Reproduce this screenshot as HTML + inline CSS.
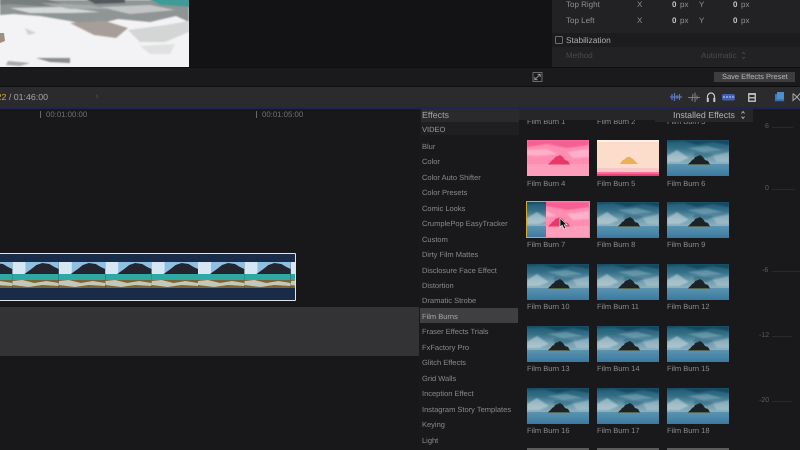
<!DOCTYPE html>
<html><head><meta charset="utf-8"><style>
html,body{margin:0;padding:0;background:#18181a}
#p{position:relative;width:800px;height:450px;overflow:hidden;background:#18181a;font-family:"Liberation Sans",sans-serif;color:#9a9a9a;text-rendering:geometricPrecision}
.a{position:absolute}
.t{position:absolute;white-space:nowrap;line-height:12px;font-size:8px;color:#8f8f8f}
.c{position:absolute;left:422px;white-space:nowrap;line-height:12px;font-size:7.5px;color:#8a8a8a}
.l{position:absolute;white-space:nowrap;line-height:12px;font-size:7.5px;color:#8c8c8c}
svg.th{position:absolute;width:62px;height:36px}
</style></head><body><div id="p">

<svg width="0" height="0" style="position:absolute"><defs>
<linearGradient id="sk" x1="0" y1="0" x2="0" y2="1"><stop offset="0" stop-color="#1f5a72"/><stop offset=".35" stop-color="#346f88"/><stop offset=".7" stop-color="#6f9cae"/><stop offset="1" stop-color="#8cb0bc"/></linearGradient>
<linearGradient id="se" x1="0" y1="0" x2="0" y2="1"><stop offset="0" stop-color="#5b93b0"/><stop offset="1" stop-color="#3a7aa0"/></linearGradient>
<filter id="b1"><feGaussianBlur stdDeviation=".7"/></filter>
<filter id="b2"><feGaussianBlur stdDeviation=".9"/></filter>
<symbol id="isl" viewBox="0 0 62 36">
<rect width="62" height="24" fill="url(#sk)"/>
<g filter="url(#b1)">
<path d="M0 2L16 1 30 5 46 2 62 5V0H0Z" fill="#174a60"/>
<path d="M20 8L40 6 56 10 36 12Z" fill="#8fb6c4" opacity=".5"/>
<path d="M0 16L10 10 22 18 12 22 0 22Z" fill="#d3e2e6" opacity=".5"/>
<path d="M46 16L62 12V22L50 22Z" fill="#c5d8dd" opacity=".4"/>
<path d="M28 12L48 14 40 18 26 16Z" fill="#2f6b82" opacity=".6"/>
</g>
<rect y="24" width="62" height="12" fill="url(#se)"/>
<path d="M21 24.500C23 22 24 22 25 20L27 19 28 17 31 16 33 15 36 17 38 20 41 21 43 24.500Z" fill="#1c2226"/>
<rect x="22" y="24" width="20" height="1" fill="#5c6b48" opacity=".7"/>
</symbol>
<symbol id="pk" viewBox="0 0 62 36">
<rect width="62" height="36" fill="#ff8db2"/>
<g filter="url(#b1)">
<path d="M0 0H62V5L40 8 20 4 0 7Z" fill="#f65f91"/>
<path d="M0 10L20 9 30 14 10 16 0 15ZM40 12L62 9V17L46 18Z" fill="#ffb0ca"/>
</g>
<rect y="24" width="62" height="12" fill="#ff9dbd"/>
<path d="M21 24.500C23 22 24 22 25 20L27 19 28 17 31 16 33 15 36 17 38 20 41 21 43 24.500Z" fill="#e8386a"/>
</symbol>
<symbol id="pe" viewBox="0 0 62 36">
<rect width="62" height="36" fill="#fcdccb"/>
<rect y="0" width="62" height="2" fill="#fff0e6"/>
<path d="M23 24C24 22 25 21 26 20L28 19 30 17 33 17 36 19 38 21 41 24Z" fill="#eeb056"/>
<rect y="28" width="62" height="4" fill="#fbc6c8"/>
<rect y="32" width="62" height="2" fill="#f76f9e"/>
<rect y="34" width="62" height="2" fill="#e8406f"/>
</symbol>
<symbol id="strip" viewBox="0 0 46.400 26" preserveAspectRatio="none">
<rect width="46.400" height="12" fill="#8fc0e4"/>
<rect width="13" height="12" fill="#d6e6f2"/>
<path d="M12 12L19 7 24 3 30 1 37 2 42 5 46.400 7V12Z" fill="#23262f"/>
<rect y="12" width="46.400" height="8" fill="#2fa8a4"/>
<rect y="18" width="46.400" height="8" fill="#7a6632"/>
<path d="M0 19L10 18 22 21 34 19 46.400 21V24L30 23 16 25 0 23Z" fill="#c4c8bc"/>
</symbol>
</defs></svg>

<!-- viewer image -->
<svg class="a" style="left:0;top:0" width="189" height="67" viewBox="0 0 189 67">
<rect width="189" height="67" fill="#f3f2f4"/>
<g filter="url(#b2)">
<path d="M0 0H189V22L176 16 150 22 118 19 90 26 70 21 40 16 14 14 0 15Z" fill="#8f9595"/>
<path d="M148 -2H192V7L160 5Z" fill="#3f9a98"/>
<path d="M85 -2H125V3L95 4Z" fill="#55595b"/>
<path d="M0 -2H45L65 5 40 6 10 4 0 5Z" fill="#787d7d"/>
<path d="M10 8L60 7 100 12 70 13 30 13Z" fill="#d6d8d7"/>
<path d="M100 7L150 5 175 10 130 14Z" fill="#c2c5c4"/>
<path d="M40 3L90 5 110 9 70 9Z" fill="#a6aaaa"/>
<path d="M70 23L105 21 128 28 116 38 94 35Z" fill="#a89e99"/>
<path d="M128 30L166 25 189 21V32L165 42 140 42Z" fill="#d4d5d5"/>
<path d="M36 58L70 58 70 63 50 62Z" fill="#8a8e8d"/>
<path d="M8 61L30 63 20 66 6 65Z" fill="#a8abaa"/>
<path d="M25 28L36 33 28 35Z" fill="#d0d2d1"/>
<path d="M140 46L175 44 170 54 150 54Z" fill="#e0e1e1"/>
</g>
<path d="M0 33L4 33 5 41 0 43Z" fill="#9c917c"/>
</svg>

<div class="a" style="left:189px;top:0;width:363px;height:68px;background:#131315"></div>
<div class="a" style="left:0;top:67px;width:800px;height:1px;background:#0f0f10"></div>
<div class="a" style="left:0;top:68px;width:800px;height:19px;background:#1a1a1c"></div>
<div class="a" style="left:0;top:86px;width:800px;height:1px;background:#0e0e0f"></div>

<!-- inspector -->
<div class="a" style="left:552px;top:0;width:248px;height:67px;background:#1c1c1e"></div>
<div class="a" style="left:552px;top:0;width:248px;height:33px;background:#222224"></div>
<div class="a" style="left:552px;top:47px;width:248px;height:20px;background:#222224"></div>
<div class="t" style="left:566px;top:-1px">Top Right</div>
<div class="t" style="left:637px;top:-1px">X</div>
<div class="t" style="left:672px;top:-1px;color:#c4c4c4;font-weight:bold">0</div>
<div class="t" style="left:680px;top:-1px">px</div>
<div class="t" style="left:699px;top:-1px">Y</div>
<div class="t" style="left:733px;top:-1px;color:#c4c4c4;font-weight:bold">0</div>
<div class="t" style="left:741px;top:-1px">px</div>
<div class="t" style="left:566px;top:15px">Top Left</div>
<div class="t" style="left:637px;top:15px">X</div>
<div class="t" style="left:672px;top:15px;color:#c4c4c4;font-weight:bold">0</div>
<div class="t" style="left:680px;top:15px">px</div>
<div class="t" style="left:699px;top:15px">Y</div>
<div class="t" style="left:733px;top:15px;color:#c4c4c4;font-weight:bold">0</div>
<div class="t" style="left:741px;top:15px">px</div>
<div class="a" style="left:555px;top:36px;width:6px;height:6px;border:1px solid #6d6d6d;border-radius:1.500px"></div>
<div class="t" style="left:566px;top:34px;color:#b0b0b0;font-size:8.300px">Stabilization</div>
<div class="t" style="left:566px;top:50px;color:#4a4a4c">Method</div>
<div class="t" style="left:701px;top:50px;color:#4a4a4c">Automatic</div>
<svg class="a" style="left:741px;top:51px" width="5" height="9" viewBox="0 0 5 9"><path d="M1 3L2.500 1.300 4 3M1 6L2.500 7.700 4 6" stroke="#4a4a4c" stroke-width=".8" fill="none"/></svg>

<svg class="a" style="left:532px;top:72px" width="11" height="10" viewBox="0 0 11 10"><rect x="1" y="0.500" width="9" height="9" fill="none" stroke="#7d7d7d" stroke-width=".8"/><path d="M3 7.500L8 2.500M5.500 2.300H8.200V5M2.800 5V7.700H5.500" fill="none" stroke="#a5a5a5" stroke-width=".8"/></svg>
<div class="a" style="left:714px;top:72px;width:81px;height:10px;background:#3d3d3f"></div>
<div class="t" style="left:722px;top:71px;color:#b5b5b5;font-size:7.500px">Save Effects Preset</div>

<!-- toolbar -->
<div class="a" style="left:0;top:87px;width:800px;height:20px;background:#2b2b2d"></div>
<div class="a" style="left:0;top:107px;width:800px;height:2px;background:#1e2454"></div>
<div class="t" style="left:-3.400px;top:91px;font-size:8.800px;color:#a5a5a5"><span style="color:#d6a63a">22</span> / 01:46:00</div>
<div class="a" style="left:95px;top:95px;width:2px;height:2px;border-top:1px solid #444;border-right:1px solid #444;transform:rotate(45deg)"></div>
<svg class="a" style="left:668px;top:90px" width="132" height="14" viewBox="0 0 132 14">
<path d="M2 7H14M4 4V10M6.500 3V11M9 5V9M11.500 4V10" stroke="#5c78c0" stroke-width="1.200" fill="none"/>
<path d="M20 7.500H32M25 4L24 11M27 2.500V12M29 5.500V9.500" stroke="#7c7c7c" stroke-width="1.100" fill="none"/>
<path d="M39.500 9V6.500A3.500 3.500 0 0 1 46.500 6.500V9" stroke="#c8c8c8" stroke-width="1.200" fill="none"/><rect x="38.800" y="8" width="2" height="4" fill="#c8c8c8"/><rect x="45.300" y="8" width="2" height="4" fill="#c8c8c8"/>
<rect x="54" y="4" width="13" height="6.500" rx="2" fill="#3f5fb0"/><path d="M55 7H66" stroke="#cfd8f0" stroke-width=".9" stroke-dasharray="2 1"/>
<rect x="80" y="3" width="8" height="9" fill="#b5b5b5"/><rect x="81.500" y="5" width="5" height="2" fill="#2b2b2d"/><rect x="81.500" y="8.500" width="5" height="2" fill="#2b2b2d"/>
<rect x="107" y="4" width="9" height="7" fill="#3f78b8"/><rect x="109" y="2" width="7" height="7" fill="#4f8ecc"/><path d="M106 11.500H117" stroke="#2a2f80" stroke-width="1.300"/>
<path d="M125 3.500L129 7 125 10.500V3.500M132 3.500L129 7 132 10.500" stroke="#aaa" fill="none"/>
</svg>

<!-- timeline -->
<div class="a" style="left:39.500px;top:111px;width:1px;height:7px;background:#6a6a6a"></div>
<div class="t" style="left:46px;top:108.500px;font-size:7.800px;color:#717171">00:01:00:00</div>
<div class="a" style="left:255.500px;top:111px;width:1px;height:7px;background:#6a6a6a"></div>
<div class="t" style="left:262px;top:108.500px;font-size:7.800px;color:#717171">00:01:05:00</div>

<!-- clip -->
<div class="a" style="left:-2px;top:253px;width:296px;height:46px;background:#182c4a;border:1px solid #e2e4e6;border-radius:1px"></div>
<svg class="a" style="left:-34px;top:262px" width="329" height="26" viewBox="0 0 329 26" preserveAspectRatio="none">
<use href="#strip" x="0" width="46.400" height="26"/><use href="#strip" x="46.400" width="46.400" height="26"/><use href="#strip" x="92.800" width="46.400" height="26"/><use href="#strip" x="139.200" width="46.400" height="26"/><use href="#strip" x="185.600" width="46.400" height="26"/><use href="#strip" x="232" width="46.400" height="26"/><use href="#strip" x="278.400" width="46.400" height="26"/><use href="#strip" x="324.800" width="46.400" height="26"/>
</svg>
<div class="a" style="left:0;top:307px;width:419px;height:49px;background:#333335"></div>

<!-- effects sidebar -->
<div class="a" style="left:419px;top:109px;width:381px;height:341px;background:#19191b"></div>
<div class="a" style="left:421px;top:109px;width:98px;height:13px;background:#2a2a2c"></div>
<div class="a" style="left:421px;top:122px;width:98px;height:13px;background:#1f1f21"></div>
<div class="t" style="left:422px;top:109px;font-size:8.900px;color:#a5a5a5">Effects</div>
<div class="c" style="top:124px;color:#9a9a9a">VIDEO</div>
<div class="a" style="left:420px;top:308px;width:98px;height:15px;background:#3f3f41"></div>
<div class="c" style="top:141px">Blur</div>
<div class="c" style="top:156px">Color</div>
<div class="c" style="top:172px">Color Auto Shifter</div>
<div class="c" style="top:187px">Color Presets</div>
<div class="c" style="top:203px">Comic Looks</div>
<div class="c" style="top:218px">CrumplePop EasyTracker</div>
<div class="c" style="top:234px">Custom</div>
<div class="c" style="top:249px">Dirty Film Mattes</div>
<div class="c" style="top:265px">Disclosure Face Effect</div>
<div class="c" style="top:280px">Distortion</div>
<div class="c" style="top:295px">Dramatic Strobe</div>
<div class="c" style="top:311px;color:#a8a8a8">Film Burns</div>
<div class="c" style="top:326px">Fraser Effects Trials</div>
<div class="c" style="top:342px">FxFactory Pro</div>
<div class="c" style="top:357px">Glitch Effects</div>
<div class="c" style="top:373px">Grid Walls</div>
<div class="c" style="top:388px">Inception Effect</div>
<div class="c" style="top:404px">Instagram Story Templates</div>
<div class="c" style="top:419px">Keying</div>
<div class="c" style="top:435px">Light</div>

<!-- browser grid -->
<div class="l" style="left:527px;top:116px">Film Burn 1</div>
<div class="l" style="left:597px;top:116px">Film Burn 2</div>
<div class="l" style="left:667px;top:116px">Film Burn 3</div>
<div class="a" style="left:519px;top:107px;width:281px;height:2px;background:#1e2454"></div>
<div class="a" style="left:519px;top:109px;width:281px;height:11px;background:#19191b"></div>
<div class="a" style="left:519px;top:109px;width:234px;height:13px;background:#262628;clip-path:polygon(58% 0,100% 0,100% 100%,58% 100%,58% 85%,0 85%,0 0)"></div>
<div class="t" style="left:673px;top:109px;font-size:8.800px;color:#b4b4b4">Installed Effects</div>
<svg class="a" style="left:740px;top:110px" width="6" height="10" viewBox="0 0 6 10"><path d="M1.500 3.500L3 1.500 4.500 3.500M1.500 6.500L3 8.500 4.500 6.500" stroke="#b4b4b4" stroke-width=".9" fill="none"/></svg>

<svg class="th" style="left:527px;top:140px"><use href="#pk" width="62" height="36"/></svg>
<svg class="th" style="left:597px;top:140px"><use href="#pe" width="62" height="36"/></svg>
<svg class="th" style="left:667px;top:140px"><use href="#isl" width="62" height="36"/></svg>
<div class="l" style="left:527px;top:178px">Film Burn 4</div><div class="l" style="left:597px;top:178px">Film Burn 5</div><div class="l" style="left:667px;top:178px">Film Burn 6</div>

<svg class="th" style="left:527px;top:202px"><use href="#pk" width="62" height="36"/></svg>
<svg class="a" style="left:527px;top:202px" width="19" height="36" viewBox="0 0 19 36"><use href="#isl" width="62" height="36"/></svg>
<div class="a" style="left:526px;top:201px;width:62px;height:35px;border:1px solid #d9a92f"></div>
<svg class="a" style="left:559px;top:217px" width="9" height="13" viewBox="0 0 9 13"><path d="M1 1V10L3.200 8.200 5 12 6.800 11 5.200 7.800H8Z" fill="#111" stroke="#eee" stroke-width=".7"/></svg>
<svg class="th" style="left:597px;top:202px"><use href="#isl" width="62" height="36"/></svg>
<svg class="th" style="left:667px;top:202px"><use href="#isl" width="62" height="36"/></svg>
<div class="l" style="left:527px;top:239px">Film Burn 7</div><div class="l" style="left:597px;top:239px">Film Burn 8</div><div class="l" style="left:667px;top:239px">Film Burn 9</div>

<svg class="th" style="left:527px;top:264px"><use href="#isl" width="62" height="36"/></svg>
<svg class="th" style="left:597px;top:264px"><use href="#isl" width="62" height="36"/></svg>
<svg class="th" style="left:667px;top:264px"><use href="#isl" width="62" height="36"/></svg>
<div class="l" style="left:527px;top:301px">Film Burn 10</div><div class="l" style="left:597px;top:301px">Film Burn 11</div><div class="l" style="left:667px;top:301px">Film Burn 12</div>

<svg class="th" style="left:527px;top:326px"><use href="#isl" width="62" height="36"/></svg>
<svg class="th" style="left:597px;top:326px"><use href="#isl" width="62" height="36"/></svg>
<svg class="th" style="left:667px;top:326px"><use href="#isl" width="62" height="36"/></svg>
<div class="l" style="left:527px;top:363px">Film Burn 13</div><div class="l" style="left:597px;top:363px">Film Burn 14</div><div class="l" style="left:667px;top:363px">Film Burn 15</div>

<svg class="th" style="left:527px;top:388px"><use href="#isl" width="62" height="36"/></svg>
<svg class="th" style="left:597px;top:388px"><use href="#isl" width="62" height="36"/></svg>
<svg class="th" style="left:667px;top:388px"><use href="#isl" width="62" height="36"/></svg>
<div class="l" style="left:527px;top:425px">Film Burn 16</div><div class="l" style="left:597px;top:425px">Film Burn 17</div><div class="l" style="left:667px;top:425px">Film Burn 18</div>

<div class="a" style="left:527px;top:448px;width:62px;height:2px;background:#5c5c5c"></div>
<div class="a" style="left:597px;top:448px;width:62px;height:2px;background:#5c5c5c"></div>
<div class="a" style="left:667px;top:448px;width:62px;height:2px;background:#5c5c5c"></div>

<!-- meter -->
<div class="t" style="left:765px;top:121px;font-size:7px;color:#5e5e5e">6</div>
<div class="a" style="left:772px;top:127px;width:21px;height:1px;background:#2a2a2c"></div>
<div class="t" style="left:765px;top:183px;font-size:7px;color:#5e5e5e">0</div>
<div class="a" style="left:772px;top:189px;width:23px;height:1px;background:#2a2a2c"></div>
<div class="t" style="left:762px;top:265px;font-size:7px;color:#5e5e5e">-6</div>
<div class="a" style="left:772px;top:271px;width:28px;height:1px;background:#2a2a2c"></div>
<div class="t" style="left:759px;top:330px;font-size:7px;color:#5e5e5e">-12</div>
<div class="a" style="left:772px;top:336px;width:20px;height:1px;background:#2a2a2c"></div>
<div class="t" style="left:759px;top:395px;font-size:7px;color:#5e5e5e">-20</div>
<div class="a" style="left:772px;top:401px;width:20px;height:1px;background:#2a2a2c"></div>

</div></body></html>
